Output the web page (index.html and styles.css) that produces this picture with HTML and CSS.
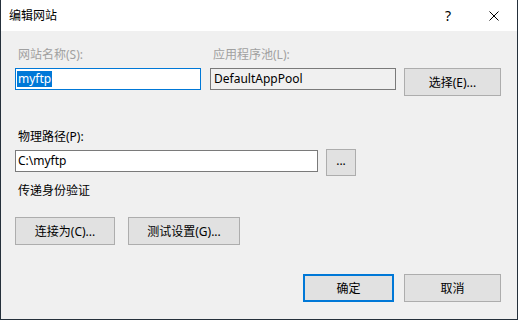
FILE: index.html
```html
<!DOCTYPE html>
<html lang="zh-CN">
<head>
  <meta charset="UTF-8">
  <title>编辑网站</title>
  <link rel="stylesheet" href="styles.css">
</head>
<body>

<div class="dialog">
  <div class="titlebar">
    <span class="title">编辑网站</span>
    <div class="title-buttons">
      <span class="tb-btn help">?</span>
      <span class="tb-btn close">
        <svg width="10" height="10" viewBox="0 0 10 10">
          <path d="M0.5 0.5 L9.5 9.5 M9.5 0.5 L0.5 9.5" stroke="#000" stroke-width="1" fill="none"/>
        </svg>
      </span>
    </div>
  </div>

  <div class="dialog-body">
    <div class="site-grid">
      <div class="label disabled">网站名称(S):</div>
      <div class="label disabled">应用程序池(L):</div>
      <div></div>
      <div class="field focused"><span class="sel">myftp</span></div>
      <div class="field readonly">DefaultAppPool</div>
      <button class="btn">选择(E)...</button>
    </div>

    <div class="label path-label">物理路径(P):</div>
    <div class="path-row">
      <div class="field path-field">C:\myftp</div>
      <button class="btn browse">...</button>
    </div>

    <div class="label auth-label">传递身份验证</div>
    <div class="auth-row">
      <button class="btn connect">连接为(C)...</button>
      <button class="btn test">测试设置(G)...</button>
    </div>

    <div class="footer">
      <button class="btn ok">确定</button>
      <button class="btn cancel">取消</button>
    </div>
  </div>
</div>

</body>
</html>
```

FILE: styles.css
```css
html, body {
  margin: 0;
  padding: 0;
  background: #f0f0f0;
}

body {
  font-family: "Noto Sans", "Noto Sans CJK SC", sans-serif;
  font-size: 12px;
  color: #000;
}

.dialog {
  width: 518px;
  height: 320px;
  box-sizing: border-box;
  border: 1px solid #25303b;
  border-top: none;
  background: #f0f0f0;
}

.titlebar {
  height: 31px;
  background: #fff;
  display: flex;
  justify-content: space-between;
  align-items: center;
}

.title {
  padding-left: 8px;
  line-height: 31px;
}

.title-buttons {
  display: flex;
  height: 31px;
}

.tb-btn {
  width: 46px;
  display: flex;
  align-items: center;
  justify-content: center;
}

.tb-btn.help {
  font-size: 14px;
  padding-bottom: 1px;
}

.dialog-body {
  padding: 16px 16px 0 14px;
}

.label {
  line-height: 16px;
}

.label.disabled {
  color: #a0a0a0;
  padding-left: 3px;
}

.site-grid {
  display: grid;
  grid-template-columns: 187px 186px 97px;
  column-gap: 8px;
  row-gap: 5px;
  align-items: start;
}

.field {
  height: 22px;
  box-sizing: border-box;
  border: 1px solid #7a7a7a;
  background: #fff;
  line-height: 20px;
  padding-left: 2px;
  white-space: nowrap;
  overflow: hidden;
}

.field.focused {
  width: 186px;
  border-color: #0078d7;
  padding-left: 1px;
}

.sel {
  display: inline-block;
  background: #0078d7;
  color: #fff;
  line-height: 16px;
  padding: 0 1px;
  vertical-align: middle;
  margin-top: -2px;
}

.field.readonly {
  background: #f0f0f0;
  padding-left: 3px;
}

.btn {
  height: 28px;
  box-sizing: border-box;
  border: 1px solid #adadad;
  background: #e1e1e1;
  font-family: inherit;
  font-size: 12px;
  color: #000;
  padding: 0;
  margin: 0;
}

.path-label {
  margin-top: 33px;
  margin-bottom: 5px;
  padding-left: 3px;
}

.path-row {
  display: flex;
  align-items: flex-start;
  gap: 8px;
}

.path-field {
  width: 303px;
}

.btn.browse {
  width: 30px;
  height: 27px;
  margin-top: -1px;
  padding-bottom: 4px;
}

.auth-label {
  margin-top: 7px;
  padding-left: 3px;
}

.auth-row {
  display: flex;
  gap: 13px;
  margin-top: 18px;
}

.btn.connect {
  width: 100px;
}

.btn.test {
  width: 112px;
}

.footer {
  display: flex;
  justify-content: flex-end;
  gap: 10px;
  margin-top: 29px;
}

.btn.ok {
  width: 91px;
  border: 2px solid #0078d7;
}

.btn.cancel {
  width: 97px;
}
```
